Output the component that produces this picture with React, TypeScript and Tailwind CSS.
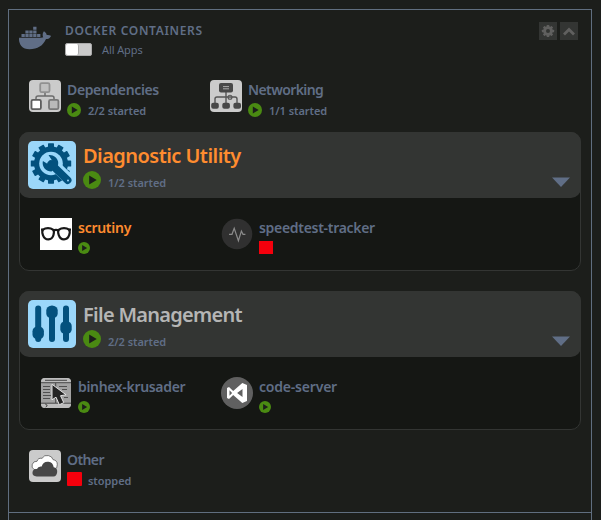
import type { ReactNode } from "react";
import { FaDocker } from "react-icons/fa";

function Play({ size }: { size: number }) {
  return (
    <svg width={size} height={size} viewBox="0 0 16 16" className="block shrink-0">
      <circle cx="8" cy="8" r="8" fill="#4a8a12" />
      <path d="M5.5 4.1 12.200 8l-6.700 3.900z" fill="#1c1e1b" />
    </svg>
  );
}

function GearTeeth({ cx, cy, r, w, h, n }: { cx: number; cy: number; r: number; w: number; h: number; n: number }) {
  return (
    <>
      {Array.from({ length: n }, (_, i) => (
        <rect key={i} x={cx - w / 2} y={cy - r} width={w} height={h} rx="0.6" transform={`rotate(${(360 / n) * i} ${cx} ${cy})`} />
      ))}
    </>
  );
}

function DependenciesIcon() {
  return (
    <svg width="32" height="32" viewBox="0 0 32 32" className="block shrink-0">
      <rect width="32" height="32" rx="4" fill="#cbcbcb" />
      <path d="M16 12v4M7 20v-2q0-2 2-2h14q2 0 2 2v2" fill="none" stroke="#6c6c6c" strokeWidth="1.5" />
      <rect x="11.2" y="3.2" width="9.3" height="9" rx="1.5" fill="#c0c0c0" stroke="#919191" strokeWidth="1.8" />
      <rect x="2.5" y="19.8" width="9.4" height="9.4" rx="1.5" fill="#fff" stroke="#5e5e5e" strokeWidth="1.8" />
      <rect x="20" y="19.8" width="9.4" height="9.4" rx="1.5" fill="#b9b9b9" stroke="#777" strokeWidth="1.8" />
    </svg>
  );
}

function NetworkingIcon() {
  return (
    <svg width="32" height="32" viewBox="0 0 32 32" className="block shrink-0">
      <rect width="32" height="32" rx="4" fill="#cbcbcb" />
      <path d="M16 12v12M5 23v-4q0-2 2-2h18q2 0 2 2v4" fill="none" stroke="#555" strokeWidth="1.4" />
      <circle cx="20" cy="17.3" r="2" fill="none" stroke="#555" strokeWidth="1.1" />
      <rect x="9" y="3" width="14" height="9.5" rx="2" fill="#484848" />
      <path d="M13 6.6h6M13 8.8h6" stroke="#aaa" strokeWidth="1" />
      <g fill="#484848">
        <rect x="1.2" y="22.8" width="7.6" height="6" rx="2" />
        <rect x="12.3" y="22.8" width="7.6" height="6" rx="2" />
        <rect x="23.4" y="22.8" width="7.6" height="6" rx="2" />
      </g>
    </svg>
  );
}

function DiagnosticIcon() {
  return (
    <svg width="48" height="48" viewBox="0 0 48 48" className="block shrink-0">
      <rect width="48" height="48" rx="5" fill="#9bd7fa" />
      <g fill="#03517e">
        <GearTeeth cx={23} cy={22.5} r={20.2} w={6} h={6} n={12} />
        <circle cx="23" cy="22.5" r="17" />
      </g>
      <circle cx="23" cy="22.5" r="11.8" fill="#9bd7fa" />
      <path d="M27 25 42 39" stroke="#9bd7fa" strokeWidth="11" />
      <path d="M23 23 39.700 39.200" stroke="#03517e" strokeWidth="7.500" strokeLinecap="round" />
      <path d="M20.500 14a8.500 8.500 0 0 1 9.500 10.500l-6.500 6a8.500 8.500 0 0 1-8.600-10.500l5.600 3.600 4-3.400z" fill="#03517e" />
      <circle cx="40" cy="39.500" r="1" fill="#9bd7fa" />
    </svg>
  );
}

function SlidersIcon() {
  return (
    <svg width="48" height="48" viewBox="0 0 48 48" className="block shrink-0">
      <rect width="48" height="48" rx="5" fill="#9bd7fa" />
      <g stroke="#03517e" strokeWidth="6" strokeLinecap="round">
        <path d="M10.200 8.500v30.500M24 8.500v30.500M38 8.500v30.500" />
      </g>
      <g fill="#03517e">
        <rect x="4.500" y="26.700" width="11.400" height="12.300" rx="4.500" />
        <rect x="18.300" y="6" width="11.400" height="12" rx="4.500" />
        <rect x="32.300" y="21.500" width="11.400" height="12.300" rx="4.500" />
      </g>
    </svg>
  );
}

function GlassesIcon() {
  return (
    <svg width="32" height="32" viewBox="0 0 32 32" className="block shrink-0">
      <rect width="32" height="32" fill="#fff" />
      <g fill="none" stroke="#181818" strokeWidth="2.2">
        <path d="M3 11.7c2.7-2 7.3-2 10 0 1.6 1.3 1.2 9.5-4.500 9.7S1.4 13.5 3 11.7zM19 11.7c2.7-2 7.3-2 10 0 1.6 1.8.5 9.5-5 9.7s-6.800-8.200-5-9.700z" />
        <path d="M13 12.7q3-1.5 6 0M1 11.6h2.3M28.5 11.6H31" />
      </g>
    </svg>
  );
}

function SpeedtestIcon() {
  return (
    <svg width="32" height="32" viewBox="0 0 32 32" className="block shrink-0">
      <circle cx="16" cy="16" r="15.3" fill="#303030" />
      <path d="M8 16.3h3l2.2-6 4.2 12.4 3-9.6 1.6 3.2h2.4" fill="none" stroke="#8b8b8b" strokeWidth="1.2" />
    </svg>
  );
}

function KrusaderIcon() {
  return (
    <svg width="32" height="32" viewBox="0 0 32 32" className="block shrink-0">
      <rect x="1" y="1" width="30" height="30" rx="4" fill="#a2a2a2" />
      <path d="M1 6V5q0-4 4-4h22q4 0 4 4v1zM1 26.5h30q0 4.5-4 4.5H5q-4 0-4-4.500z" fill="#bdbdbd" />
      <path d="M5 3.3h22M1 5.7h30M1 26.2h30M15.700 6v20" stroke="#484848" strokeWidth="1" />
      <path d="M3 9.500h7M3 12.500h7M3 15.500h7M3 18.500h8M3 21.500h7M19 9.500h8M22 12.500h5M24 20.500h4" stroke="#505050" strokeWidth="1" />
      <path d="m5.300 27 2 1.500-1.600 1.500" stroke="#333" fill="none" />
      <path d="M12 7.300v15.500l4-2.600 3.300 7.500 4.500-2-3.300-7 5.600-.9z" fill="#242424" stroke="#e5e5e5" strokeWidth="1" strokeLinejoin="round" />
    </svg>
  );
}

function CodeIcon() {
  return (
    <svg width="32" height="32" viewBox="0 0 32 32" className="block shrink-0">
      <circle cx="16" cy="16" r="16" fill="#606060" />
      <path d="M21.300 6 26 8v16l-4.700 2-9.100-7.900L8 22l-2-1V11l2-1 4.200 3.900zM21.500 12 16.100 16l5.400 4zM8.500 13.300v5.400l2.600-2.700z" fill="#fff" fillRule="evenodd" />
    </svg>
  );
}

function CloudIcon() {
  return (
    <svg width="32" height="32" viewBox="0 0 32 32" className="block shrink-0">
      <rect width="32" height="32" rx="4" fill="#cbcbcb" />
      <path d="M5 19.500a4.500 4.500 0 0 1 3-8.200q1-3.700 5-3 2.300-3.800 6.500-2.700 3.800.8 4.500 4 4.500.8 4.300 5 .4 4-3 4.500z" fill="#fff" stroke="#555" strokeWidth=".8" />
      <path d="M7.700 26.500q-4.700-.5-4.200-4.300.5-3.300 4.500-3.200 1-3 4.700-2.500 1.300-5.300 6.800-4.800 4.300.4 5.200 5.500 3.700.5 3.500 4.700-.4 4.100-3.700 4.600z" fill="#474747" />
    </svg>
  );
}

type FolderProps = { icon: ReactNode; name: string; nameClass: string; status: string; stopped?: boolean };

function Folder({ icon, name, nameClass, status, stopped }: FolderProps) {
  return (
    <div className="flex w-[181px] gap-1.5">
      {icon}
      <div className="flex flex-col whitespace-nowrap">
        <span className={"h-5 text-[14px] leading-5 font-semibold " + nameClass}>{name}</span>
        <div className={"flex h-4 items-center " + (stopped ? "gap-[6px]" : "gap-[7px] pt-[3px]")}>
          {stopped ? <span className="mt-[2px] block h-[14px] w-[15px] shrink-0 rounded-[1px] bg-[#f5000c]" /> : <Play size={14} />}
          <span className={"text-[11px] leading-4 font-semibold tracking-[-0.05px] " + (stopped ? "pt-[6px]" : "pt-[3px]")}>{status}</span>
        </div>
      </div>
    </div>
  );
}

function Container({ icon, name, nameClass, stopped }: { icon: ReactNode; name: string; nameClass: string; stopped?: boolean }) {
  return (
    <div className="flex w-[181px] gap-1.5">
      {icon}
      <div className="whitespace-nowrap">
        <div className={"h-5 text-[14px] leading-5 font-semibold " + nameClass}>{name}</div>
        <div className="pt-[4px] pl-[0.4px]">{stopped ? <div className="mt-[-1px] h-[13px] w-[14px] bg-[#f5000c]" /> : <Play size={12} />}</div>
      </div>
    </div>
  );
}

type GroupProps = { icon: ReactNode; name: string; nameClass: string; status: string; children: ReactNode };

function Group({ icon, name, nameClass, status, children }: GroupProps) {
  return (
    <section className="h-[139px] rounded-[10px] border border-[#333533] bg-[#151714]">
      <header className="-mx-px -mt-px flex h-[66px] rounded-[10px] bg-[#333533] pt-[9px] pl-[9px]">
        {icon}
        <div className="ml-[7px] flex-1 whitespace-nowrap">
          <div className={"h-[30px] text-[20px] leading-[30px] font-semibold " + nameClass}>{name}</div>
          <div className="flex items-center gap-[7px]">
            <Play size={18} />
            <span className="pt-1.5 text-[11px] leading-3 font-semibold tracking-[-0.05px]">{status}</span>
          </div>
        </div>
        <svg width="18" height="10" viewBox="0 0 18 10" className="mt-[36px] mr-[11px]">
          <path d="M0 .500h18L9 10z" fill="#606e86" />
        </svg>
      </header>
      <div className="flex pt-[20px] pl-5">{children}</div>
    </section>
  );
}

export default function App() {
  return (
    <div className="h-[520px] w-[601px] overflow-hidden bg-[#1c1e1b] pt-[9px] pl-2 font-['Noto_Sans',sans-serif] text-[#606e86]">
      <main className="h-[504px] w-[584px] border border-[#606e7f] px-[10px]">
        <header className="flex h-[70px] pt-[11px]">
          <FaDocker className="mt-[1px] h-[32px] w-[32px]" />
          <div className="ml-[14px] flex-1 whitespace-nowrap">
            <h1 className="h-5 text-[12px] leading-5 font-semibold tracking-[0.65px]">DOCKER CONTAINERS</h1>
            <div className="flex items-center pt-[2px]">
              <div className="h-[13px] w-[27px] rounded-[2px] border border-[#aaa] bg-[#cacaca]">
                <div className="h-[11px] w-[13px] rounded-[2px] border-r border-[#aaa] bg-white" />
              </div>
              <span className="ml-[10px] text-[11px] leading-[13px] tracking-[-0.1px]">All Apps</span>
            </div>
          </div>
          <div className="mt-[1px] mr-[3px] flex gap-[3px] text-[#60605f]">
            <span className="flex size-[18px] items-center justify-center bg-[#333533]">
              <svg width="14" height="14" viewBox="0 0 14 14" fill="currentColor">
                <GearTeeth cx={7} cy={7} r={6.1} w={2.6} h={3} n={8} />
                <circle cx="7" cy="7" r="3.400" fill="none" stroke="currentColor" strokeWidth="2.800" />
              </svg>
            </span>
            <span className="flex size-[18px] items-center justify-center bg-[#333533]">
              <svg width="12" height="10" viewBox="0 0 12 10">
                <path d="m1 8.500 5-5 5 5" fill="none" stroke="currentColor" strokeWidth="2.800" />
              </svg>
            </span>
          </div>
        </header>
        <div className="flex h-[52px] pl-[10px]">
          <Folder icon={<DependenciesIcon />} name="Dependencies" nameClass="tracking-[-0.37px]" status="2/2 started" />
          <Folder icon={<NetworkingIcon />} name="Networking" nameClass="tracking-[-0.6px]" status="1/1 started" />
        </div>
        <Group icon={<DiagnosticIcon />} name="Diagnostic Utility" nameClass="text-[#ff8c2f] tracking-[-0.55px]" status="1/2 started">
          <Container icon={<GlassesIcon />} name="scrutiny" nameClass="text-[#ff8c2f] tracking-[-0.27px]" />
          <Container icon={<SpeedtestIcon />} name="speedtest-tracker" nameClass="tracking-[-0.3px]" stopped />
        </Group>
        <div className="h-5" />
        <Group icon={<SlidersIcon />} name="File Management" nameClass="text-[#b5b5b5] tracking-[-0.72px]" status="2/2 started">
          <Container icon={<KrusaderIcon />} name="binhex-krusader" nameClass="tracking-[-0.33px]" />
          <Container icon={<CodeIcon />} name="code-server" nameClass="tracking-[-0.2px]" />
        </Group>
        <div className="pt-5 pl-[10px]">
          <Folder icon={<CloudIcon />} name="Other" nameClass="tracking-[-0.6px]" status="stopped" stopped />
        </div>
      </main>
      <div className="h-[10px] w-[584px] border-x border-[#606e7f]" />
    </div>
  );
}
